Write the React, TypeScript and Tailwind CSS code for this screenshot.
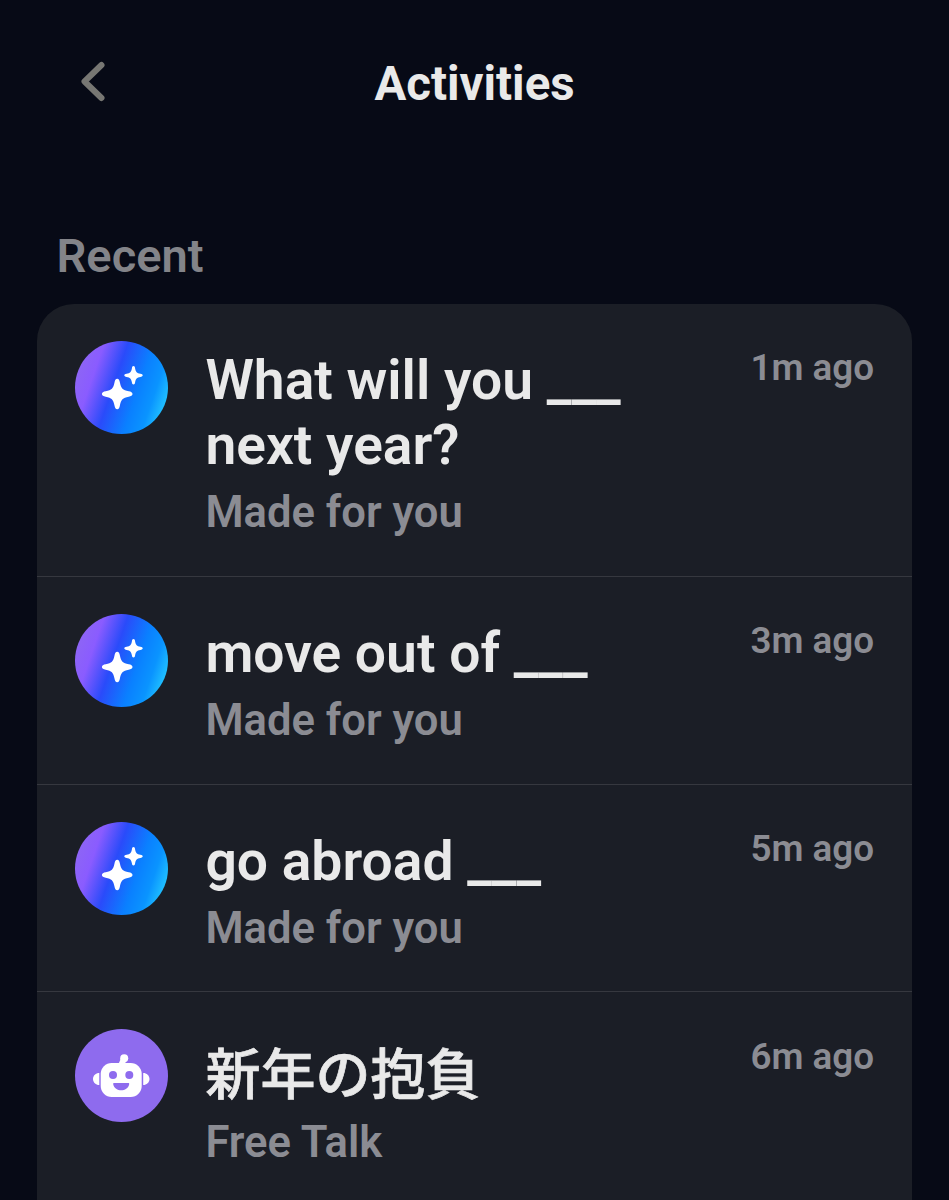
const activities = [
  { title: 'What will you ___ next year?', subtitle: 'Made for you', time: '1m ago', kind: 'spark' },
  { title: 'move out of ___', subtitle: 'Made for you', time: '3m ago', kind: 'spark' },
  { title: 'go abroad ___', subtitle: 'Made for you', time: '5m ago', kind: 'spark' },
  { title: '新年の抱負', subtitle: 'Free Talk', time: '6m ago', kind: 'bot' },
];

const STAR =
  'M0-15.3C1.600-15.3 2.300-13.8 2.700-11.500C3.900-5.500 5.500-3.900 11.500-2.700C13.800-2.300 15.300-1.600 15.300 0C15.300 1.600 13.800 2.300 11.500 2.700C5.500 3.900 3.900 5.500 2.700 11.500C2.300 13.800 1.600 15.300 0 15.300C-1.600 15.300-2.300 13.800-2.700 11.500C-3.900 5.500-5.500 3.900-11.500 2.700C-13.800 2.300-15.300 1.600-15.300 0C-15.300-1.600-13.800-2.300-11.500-2.700C-5.500-3.900-3.900-5.500-2.700-11.500C-2.300-13.800-1.600-15.300 0-15.300Z';

function SparkIcon() {
  return (
    <div className="w-[93px] h-[93px] rounded-full bg-[linear-gradient(109deg,#8e66f4_8%,#8a5cff_24%,#2a4bfa_43%,#0a80ff_64%,#0a94ff_78%,#30e0ff_98%)]">
      <svg viewBox="0 0 93 93" fill="white" className="w-full h-full">
        <path d={STAR} transform="translate(42.200 53)" />
        <path d={STAR} transform="translate(58.500 34.300) scale(.6)" />
      </svg>
    </div>
  );
}

function BotIcon() {
  return (
    <div className="w-[93px] h-[93px] rounded-full bg-[#8e6bee]">
      <svg viewBox="0 0 93 93" className="w-full h-full">
        <g fill="white">
          <circle cx="49.200" cy="29.300" r="4" />
          <path d="M46 29.500h4.500v4.500l-2 3h-6z" />
          <rect x="25.700" y="34" width="41" height="34" rx="11" />
          <path d="M24.300 44v12c-3.500 0-6.300-2.600-6.300-6s2.800-6 6.300-6zM68.200 44v12c3.500 0 6.300-2.600 6.300-6s-2.800-6-6.300-6z" />
        </g>
        <g fill="#8e6bee">
          <circle cx="38" cy="46" r="4" />
          <circle cx="54.300" cy="46" r="4" />
          <path d="M39.200 54h14c.7 0 1.200.5 1 1.200-1.700 8.200-14.300 8.200-16 0-.2-.7.3-1.200 1-1.200z" />
        </g>
      </svg>
    </div>
  );
}

export default function App() {
  return (
    <main className="h-[1200px] overflow-hidden bg-[#070a16] font-[Roboto,'Noto_Sans_CJK_JP',sans-serif] font-semibold text-[#e9e9e9]">
      <header className="grid grid-cols-3 items-center px-[75px] pt-[49px] h-[118px]">
        <svg viewBox="0 0 36 44" fill="none" stroke="#777773" strokeWidth="6" className="w-9 h-11 -mt-1.5">
          <path d="M26.500 6 9.500 22.500l17 16.500" strokeLinecap="round" strokeLinejoin="round" />
        </svg>
        <h1 className="text-center text-[47.4px] leading-[70px] font-bold whitespace-nowrap">Activities</h1>
      </header>

      <h2 className="pt-[108px] pl-[56.500px] text-[47px] leading-[60px] text-[#838489]">Recent</h2>

      <section className="mx-[37.4px] mt-[18px] h-[1000px] rounded-t-[37px] bg-[#1b1e26]">
        {activities.map((item) => (
          <article key={item.title} className="flex items-start border-b border-[#36383f] px-[37.5px] pt-[37.1px] pb-[34.8px]">
            {item.kind === 'spark' ? <SparkIcon /> : <BotIcon />}
            <div className="ml-[37.5px] w-[450px] pt-[7.4px]">
              {item.kind === 'bot' ? (
                <h3 className="pt-1 text-[55px] leading-[68px] font-medium [-webkit-text-stroke:0.7px_#e9e9e9]">{item.title}</h3>
              ) : (
                <h3 className="text-[55.2px] leading-[65px]">{item.title}</h3>
              )}
              <p className="pt-[6.500px] text-[43.6px] leading-[56px] text-[#8b8c93]">{item.subtitle}</p>
            </div>
            <time className="ml-auto pt-[5.4px] text-[36.8px] leading-[44px] text-[#8b8c93]">{item.time}</time>
          </article>
        ))}
      </section>
    </main>
  );
}
